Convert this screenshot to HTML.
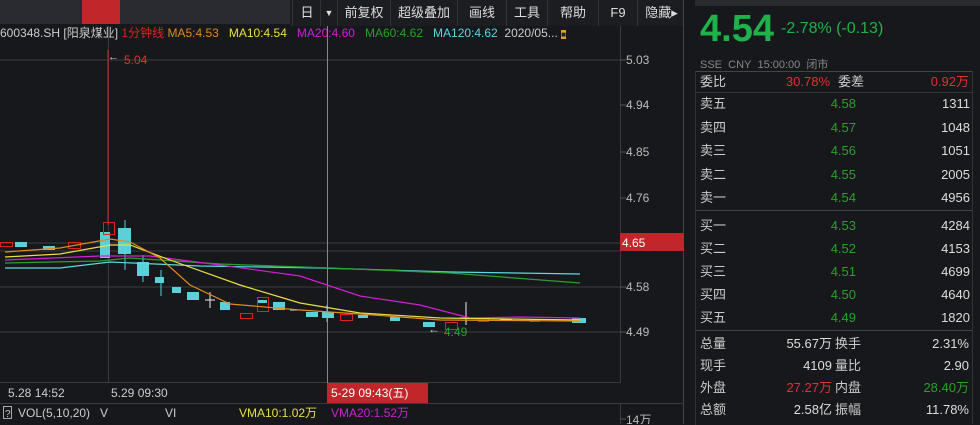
<!DOCTYPE html><html><head><meta charset="utf-8"><style>
body{margin:0;width:980px;height:424px;background:#17181c;overflow:hidden;font-family:"Liberation Sans","Noto Sans CJK SC",sans-serif;color:#ccc;position:relative}
.a{position:absolute;white-space:nowrap}
.tb{position:absolute;top:0;height:26px;line-height:26px;font-size:13px;color:#ddd;text-align:center;border-left:1px solid #333}
.r{font-size:13px;position:absolute;height:20px;line-height:20px}
</style></head><body>
<div class="a" style="left:0;top:0;width:290px;height:24px;background:#2a2b30"></div>
<div class="a" style="left:82px;top:0;width:38px;height:24px;background:#c1262a"></div>
<div class="a" style="left:290px;top:0;width:394px;height:26px;background:#1c1d21"></div>
<div class="tb" style="left:292px;width:28px">日</div>
<div class="tb" style="left:320px;width:16px;font-size:9px">▼</div>
<div class="tb" style="left:337px;width:52px">前复权</div>
<div class="tb" style="left:390px;width:66px">超级叠加</div>
<div class="tb" style="left:457px;width:48px">画线</div>
<div class="tb" style="left:506px;width:40px">工具</div>
<div class="tb" style="left:547px;width:50px">帮助</div>
<div class="tb" style="left:598px;width:38px">F9</div>
<div class="tb" style="left:637px;width:47px">隐藏▸</div>
<div class="a" style="left:0;top:25px;font-size:12px;line-height:16px">
<span style="color:#ccc">600348.SH [阳泉煤业]</span> <span style="color:#d22">1分钟线</span> <span style="color:#e08a1e">MA5:4.53</span>&nbsp;&nbsp; <span style="color:#e8e040">MA10:4.54</span>&nbsp;&nbsp; <span style="color:#d020d0">MA20:4.60</span>&nbsp;&nbsp; <span style="color:#2aa02a">MA60:4.62</span>&nbsp;&nbsp; <span style="color:#5bd8e0">MA120:4.62</span>&nbsp; <span>2020/05...</span> <span style="background:#e8a020;color:#222;font-size:8px">■</span></div>
<svg class="a" style="left:0;top:0" width="690" height="424">
<g stroke="#3a3b40" stroke-width="1">
<line x1="0" y1="60" x2="620" y2="60"/><line x1="0" y1="243" x2="620" y2="243"/><line x1="0" y1="251" x2="620" y2="251"/>
<line x1="0" y1="287" x2="620" y2="287"/><line x1="0" y1="332" x2="620" y2="332"/>
<line x1="620.5" y1="26" x2="620.5" y2="383"/><line x1="620.5" y1="403" x2="620.5" y2="424"/>
<line x1="683.5" y1="0" x2="683.5" y2="424" stroke="#444"/>
<line x1="108.5" y1="26" x2="108.5" y2="383"/>
<line x1="0" y1="382.5" x2="620" y2="382.5"/><line x1="0" y1="403.5" x2="684" y2="403.5"/>
</g>
<g stroke="#555"><line x1="620" y1="60" x2="626" y2="60"/><line x1="620" y1="105" x2="626" y2="105"/><line x1="620" y1="152" x2="626" y2="152"/><line x1="620" y1="198" x2="626" y2="198"/><line x1="620" y1="287" x2="626" y2="287"/><line x1="620" y1="332" x2="626" y2="332"/><line x1="620" y1="419" x2="626" y2="419"/></g>
<line x1="327.5" y1="26" x2="327.5" y2="383" stroke="#888"/>
<g font-size="12" fill="#bbb"><text x="626" y="64">5.03</text><text x="626" y="109">4.94</text><text x="626" y="156">4.85</text><text x="626" y="202">4.76</text><text x="626" y="291">4.58</text><text x="626" y="336">4.49</text><text x="626" y="424">14万</text></g>
<rect x="620" y="233" width="64" height="18" fill="#c1262a"/><text x="622" y="247" font-size="12" fill="#fff">4.65</text>
<line x1="108" y1="50" x2="108" y2="225" stroke="#d22"/>
<text x="124" y="64" font-size="12" fill="#d33">5.04</text><text x="108" y="60" font-size="11" fill="#ccc">←</text>
<g fill="#5bd0d8">
<rect x="15" y="242" width="12" height="5"/><rect x="43" y="246" width="12" height="4"/><rect x="100" y="232" width="10" height="26"/><rect x="118" y="228" width="13" height="26"/><rect x="137" y="262" width="12" height="14"/><rect x="155" y="277" width="9" height="6"/><rect x="172" y="287" width="9" height="6"/><rect x="187" y="292" width="12" height="8"/><rect x="220" y="302" width="10" height="8"/><rect x="257" y="300" width="10" height="3"/><rect x="273" y="302" width="12" height="8"/><rect x="306" y="312" width="12" height="5"/><rect x="322" y="312" width="12" height="6"/><rect x="358" y="315" width="10" height="3"/><rect x="390" y="317" width="10" height="4"/><rect x="423" y="322" width="12" height="5"/><rect x="572" y="318" width="14" height="5"/></g>
<g fill="none" stroke="#d22"><rect x="0.5" y="242.5" width="12" height="4"/><rect x="68.5" y="242.5" width="12" height="6"/><rect x="103.5" y="222.5" width="11" height="12"/><rect x="240.5" y="313.5" width="12" height="5"/><rect x="257.5" y="297.5" width="11" height="14"/><rect x="340.5" y="314.5" width="12" height="6"/><rect x="445.5" y="322.5" width="12" height="7"/><rect x="478.5" y="318.5" width="10" height="3"/></g>
<g stroke="#5bd0d8"><line x1="125" y1="220" x2="125" y2="270"/><line x1="143" y1="255" x2="143" y2="282"/><line x1="161" y1="270" x2="161" y2="296"/><line x1="327" y1="305" x2="327" y2="322"/></g>
<g stroke="#eee"><line x1="205" y1="300" x2="215" y2="300"/><line x1="210" y1="292" x2="210" y2="308"/><line x1="290" y1="310" x2="300" y2="310"/><line x1="460" y1="318" x2="472" y2="318"/><line x1="466" y1="302" x2="466" y2="325"/><line x1="500" y1="320" x2="512" y2="320"/><line x1="530" y1="321" x2="540" y2="321"/></g>
<g fill="none" stroke-width="1.2">
<polyline stroke="#5bd8e0" points="5,268 60,268 110,262 200,266 320,268 450,272 580,274"/>
<polyline stroke="#2aa02a" points="5,263 100,261 130,258 220,264 330,268 450,273 580,283"/>
<polyline stroke="#d020d0" points="5,260 100,256 150,256 220,265 300,276 360,296 420,305 470,318 520,317 580,318"/>
<polyline stroke="#e8e040" points="5,257 60,254 110,245 130,245 170,260 240,285 300,303 360,313 440,318 580,320"/>
<polyline stroke="#e08a1e" points="5,252 60,248 110,239 130,242 160,258 190,285 230,304 300,310 360,314 440,320 580,321"/>
</g>
<text x="428" y="333" font-size="12" fill="#ccc">←</text><text x="444" y="336" font-size="12" fill="#2aa02a">4.49</text>
<rect x="327" y="383" width="101" height="20" fill="#c1262a"/>
<g font-size="12" fill="#ccc"><text x="8" y="397">5.28 14:52</text><text x="111" y="397">5.29 09:30</text><text x="331" y="397" fill="#fff">5-29 09:43(五)</text></g>
<rect x="3.5" y="406.5" width="8" height="12" fill="none" stroke="#aaa"/><text x="5" y="417" font-size="10" fill="#ccc">?</text>
<g font-size="12"><text x="18" y="417" fill="#ccc">VOL(5,10,20)</text><text x="100" y="417" fill="#ccc">V</text><text x="165" y="417" fill="#ccc">VI</text><text x="239" y="417" fill="#e8e040">VMA10:1.02万</text><text x="331" y="417" fill="#d020d0">VMA20:1.52万</text></g>
</svg>
<div class="a" style="left:695px;top:0;width:285px;height:6px;background:#2a2b30"></div>
<div class="a" style="left:700px;top:8px;font-size:38px;font-weight:bold;color:#1fb24a">4.54</div>
<div class="a" style="left:781px;top:20px;font-size:16px;color:#1fb24a">-2.78% (-0.13)</div>
<div class="a" style="left:700px;top:56px;font-size:11px;color:#888">SSE&nbsp; CNY&nbsp; 15:00:00&nbsp; 闭市</div>
<div class="a" style="left:695px;top:71px;width:277px;height:353px;border-left:1px solid #333;border-top:1px solid #444"></div>
<div class="a" style="left:696px;top:92px;width:276px;border-top:1px solid #333"></div>
<div class="a" style="left:696px;top:210px;width:276px;border-top:1px solid #444"></div>
<div class="a" style="left:696px;top:330px;width:276px;border-top:1px solid #444"></div>
<div class="a" style="left:972px;top:71px;width:1px;height:353px;background:#333"></div>
<div class="r" style="left:700px;top:72px">委比</div><div class="r" style="left:760px;top:72px;width:70px;text-align:right;color:#d33">30.78%</div><div class="r" style="left:838px;top:72px">委差</div><div class="r" style="left:880px;top:72px;width:89px;text-align:right;color:#d33">0.92万</div>
<div id="ob"></div>
<script>
var rows=[["卖五","4.58","1311",102],["卖四","4.57","1048",126],["卖三","4.56","1051",149],["卖二","4.55","2005",173],["卖一","4.54","4956",196],["买一","4.53","4284",224],["买二","4.52","4153",247],["买三","4.51","4699",270],["买四","4.50","4640",293],["买五","4.49","1820",316]];
var h="";rows.forEach(function(r){h+='<div class="r" style="left:700px;top:'+(r[3]-8)+'px">'+r[0]+'</div><div class="r" style="left:800px;top:'+(r[3]-8)+'px;width:56px;text-align:right;color:#2aa02a">'+r[1]+'</div><div class="r" style="left:900px;top:'+(r[3]-8)+'px;width:70px;text-align:right;color:#ddd">'+r[2]+'</div>';});
var s=[["总量","55.67万","换手","2.31%",344,"#ddd","#ddd"],["现手","4109","量比","2.90",366,"#ddd","#ddd"],["外盘","27.27万","内盘","28.40万",388,"#d33","#2aa02a"],["总额","2.58亿","振幅","11.78%",410,"#ddd","#ddd"]];
s.forEach(function(r){var t=r[4]-10;h+='<div class="r" style="left:700px;top:'+t+'px">'+r[0]+'</div><div class="r" style="left:760px;top:'+t+'px;width:72px;text-align:right;color:'+r[5]+'">'+r[1]+'</div><div class="r" style="left:835px;top:'+t+'px">'+r[2]+'</div><div class="r" style="left:880px;top:'+t+'px;width:89px;text-align:right;color:'+r[6]+'">'+r[3]+'</div>';});
document.getElementById("ob").innerHTML=h;
</script>
</body></html>
